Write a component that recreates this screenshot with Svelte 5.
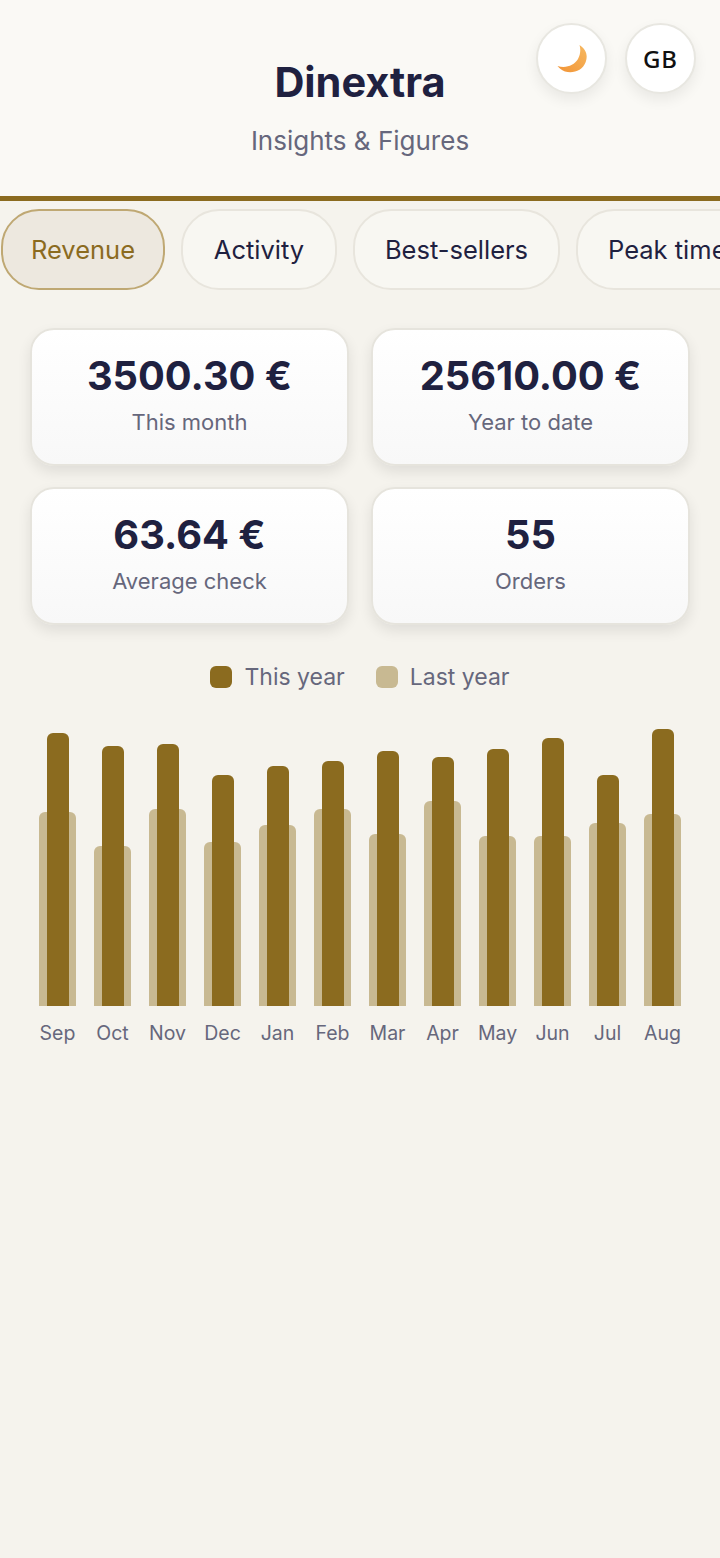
<script>
  const tabs = [
    { name: 'Revenue', width: 164 },
    { name: 'Activity', width: 156 },
    { name: 'Best-sellers', width: 207 },
    { name: 'Peak times', width: 196 }
  ]
  const stats = [
    { value: '3500.30 €', label: 'This month' },
    { value: '25610.00 €', label: 'Year to date' },
    { value: '63.64 €', label: 'Average check' },
    { value: '55', label: 'Orders' }
  ]
  const months = [
    { name: 'Sep', cur: 273, prev: 194 },
    { name: 'Oct', cur: 260, prev: 160 },
    { name: 'Nov', cur: 262, prev: 197 },
    { name: 'Dec', cur: 231, prev: 164 },
    { name: 'Jan', cur: 240, prev: 181 },
    { name: 'Feb', cur: 245, prev: 197 },
    { name: 'Mar', cur: 255, prev: 172 },
    { name: 'Apr', cur: 249, prev: 205 },
    { name: 'May', cur: 257, prev: 170 },
    { name: 'Jun', cur: 268, prev: 170 },
    { name: 'Jul', cur: 231, prev: 183 },
    { name: 'Aug', cur: 277, prev: 192 }
  ]
</script>

<div class="page">
  <header class="top">
    <h1>Dinextra</h1>
    <p class="sub">Insights &amp; Figures</p>
    <div class="actions">
      <button class="round" aria-label="Dark mode">
        <svg width="32" height="30" viewBox="0 0 32 30">
          <defs>
            <linearGradient id="moon" x1="0" y1="1" x2="1" y2="0">
              <stop offset="0" stop-color="#f29436" />
              <stop offset="1" stop-color="#f6b860" />
            </linearGradient>
          </defs>
          <path d="M23.5 1 C29.8 5 32.2 11 29.7 18 C26.7 26.5 17 30 9 27.5 C6 26.5 3.5 24.5 1.5 22 C10 24.5 18 21.5 22 15 C24.3 11 25 5.5 23.5 1 Z" fill="url(#moon)" />
        </svg>
      </button>
      <button class="round lang">GB</button>
    </div>
  </header>

  <nav class="tabs">
    {#each tabs as tab, i}
      <button class="tab" class:active={i === 0} style:width="{tab.width}px">{tab.name}</button>
    {/each}
  </nav>

  <section class="stats">
    {#each stats as stat}
      <div class="card">
        <div class="value">{stat.value}</div>
        <div class="label">{stat.label}</div>
      </div>
    {/each}
  </section>

  <div class="legend">
    <span class="key"><i class="swatch cur"></i>This year</span>
    <span class="key"><i class="swatch prev"></i>Last year</span>
  </div>

  <section class="chart">
    {#each months as m}
      <div class="col">
        <div class="bars">
          <div class="bar prev" style:height="{m.prev}px"></div>
          <div class="bar cur" style:height="{m.cur}px"></div>
        </div>
        <span class="month">{m.name}</span>
      </div>
    {/each}
  </section>
</div>

<style>
  :global(body) {
    background: #f5f3ed;
    font-family: Inter, "Liberation Sans", sans-serif;
  }

  .page {
    width: 720px;
    min-height: 1558px;
    overflow: hidden;
    background: #f5f3ed;
  }

  .top {
    position: relative;
    box-sizing: border-box;
    height: 201px;
    padding-top: 57px;
    text-align: center;
    background: #faf9f5;
    border-bottom: 5px solid #8b6b1f;
  }

  h1 {
    margin: 0;
    font-size: 41.5px;
    line-height: 50px;
    font-weight: 700;
    color: #1f2140;
  }

  .sub {
    margin: 18px 0 0;
    font-size: 26px;
    line-height: 32px;
    color: #66677c;
  }

  .actions {
    position: absolute;
    top: 23px;
    right: 24px;
    display: flex;
    gap: 18px;
  }

  .round {
    width: 71px;
    height: 71px;
    padding: 0;
    display: flex;
    align-items: center;
    justify-content: center;
    border: 2px solid #e8e7e1;
    border-radius: 50%;
    background: #fff;
    box-shadow: 0 6px 14px rgba(0, 0, 0, 0.07);
  }

  .lang {
    font-family: "Noto Sans", sans-serif;
    font-size: 24px;
    font-weight: 500;
    letter-spacing: 1px;
    color: #111;
  }

  .tabs {
    display: flex;
    gap: 16px;
    padding: 8px 0 0 1px;
    white-space: nowrap;
  }

  .tab {
    flex: none;
    box-sizing: border-box;
    height: 81px;
    padding: 0;
    font-family: inherit;
    font-size: 25.5px;
    color: #1f2140;
    background: #f8f7f2;
    border: 2px solid #e8e5dd;
    border-radius: 38px;
  }

  .tab.active {
    color: #8b6b1f;
    background: #ede8df;
    border-color: #bfa873;
  }

  .stats {
    display: grid;
    grid-template-columns: 1fr 1fr;
    gap: 21px 22px;
    padding: 38px 30px 0;
  }

  .card {
    box-sizing: border-box;
    height: 138px;
    padding-top: 21px;
    text-align: center;
    background: linear-gradient(#fff, #f8f8f8);
    border: 2px solid #e6e4dd;
    border-radius: 24px;
    box-shadow: 0 6px 14px rgba(0, 0, 0, 0.09);
  }

  .value {
    font-size: 39.8px;
    line-height: 50px;
    font-weight: 700;
    color: #1f2140;
  }

  .label {
    margin-top: 6px;
    font-size: 22px;
    line-height: 30px;
    color: #66677c;
  }

  .legend {
    display: flex;
    justify-content: center;
    gap: 31px;
    margin-top: 36px;
    font-size: 23px;
    line-height: 32px;
    color: #66677c;
  }

  .key {
    display: flex;
    align-items: center;
    gap: 12px;
  }

  .swatch {
    width: 22px;
    height: 22px;
    border-radius: 6px;
  }

  .swatch.cur {
    background: #8b6b1f;
  }

  .swatch.prev {
    background: #c8b992;
  }

  .chart {
    display: grid;
    grid-template-columns: repeat(12, 1fr);
    margin-top: 36px;
    padding: 0 30px;
  }

  .col {
    display: flex;
    flex-direction: column;
    align-items: center;
  }

  .bars {
    display: grid;
    align-items: end;
    justify-items: center;
    height: 277px;
  }

  .bar {
    grid-area: 1 / 1;
    border-radius: 6px 6px 0 0;
  }

  .bar.prev {
    width: 37px;
    background: #c8b992;
  }

  .bar.cur {
    width: 22px;
    background: #8b6b1f;
  }

  .month {
    margin-top: 13px;
    font-size: 19.5px;
    line-height: 28px;
    color: #66677c;
  }
</style>
